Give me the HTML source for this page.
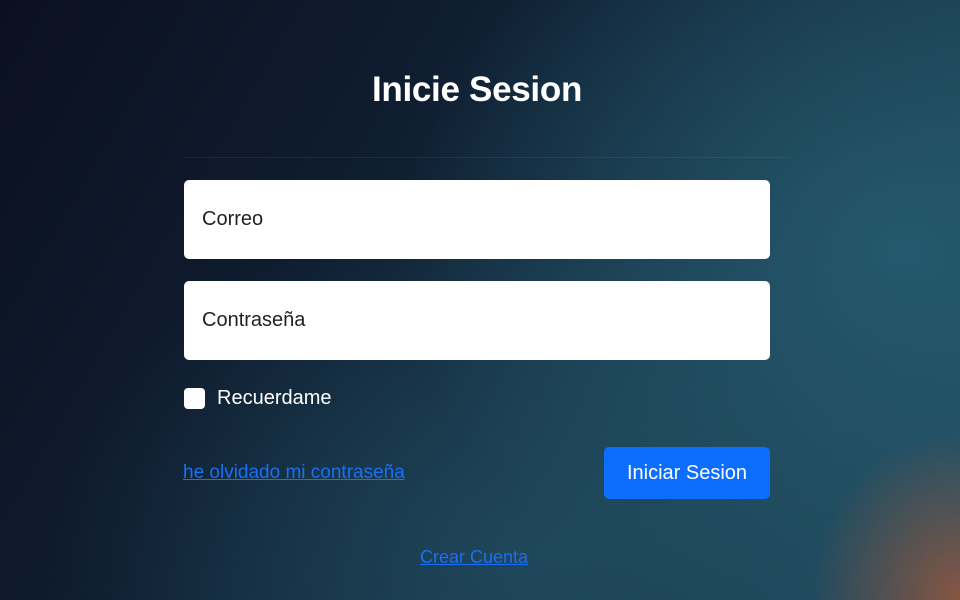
<!DOCTYPE html>
<html><head><meta charset="utf-8"><style>
html,body{margin:0;width:960px;height:600px;overflow:hidden}
body{font-family:"Liberation Sans",sans-serif;position:relative;
background:
radial-gradient(ellipse 150px 170px at 960px 600px,rgba(190,90,50,.65),rgba(190,90,50,0) 100%),
radial-gradient(ellipse 500px 400px at 900px 250px,rgba(40,95,115,.8),rgba(40,95,115,0)),
radial-gradient(ellipse 500px 350px at 550px 550px,rgba(35,80,100,.7),rgba(35,80,100,0)),
linear-gradient(120deg,#0b1020 0%,#0f1d30 35%,#173448 65%,#1f4b60 100%);}
.t{position:absolute;left:0;width:954px;top:70px;text-align:center;color:#fff;font-weight:bold;font-size:35px;letter-spacing:-0.3px}
.ln{position:absolute;left:184px;width:606px;top:157px;height:1px;background:rgba(255,255,255,.07)}
.in{position:absolute;left:184px;width:586px;height:79px;background:#fff;border-radius:5px;box-sizing:border-box;padding-left:18px;line-height:79px;font-size:20px;color:#222}
.cb{position:absolute;left:184px;top:388px;width:21px;height:21px;background:#fff;border-radius:4px}
.lb{position:absolute;left:217px;top:387px;color:#fff;font-size:20px}
a{color:#1a6ff5;text-decoration:underline;position:absolute;font-size:18px}
.btn{position:absolute;left:604px;top:447px;width:166px;height:52px;background:#0d6efd;border-radius:5px;color:#fff;font-size:20px;line-height:52px;text-align:center}
</style></head><body>
<div class="t">Inicie Sesion</div>
<div class="ln"></div>
<div class="in" style="top:180px">Correo</div>
<div class="in" style="top:281px">Contraseña</div>
<div class="cb"></div><div class="lb">Recuerdame</div>
<a style="left:183px;top:462px;font-size:19px">he olvidado mi contraseña</a>
<div class="btn">Iniciar Sesion</div>
<a style="left:420px;top:547px">Crear Cuenta</a>
</body></html>
